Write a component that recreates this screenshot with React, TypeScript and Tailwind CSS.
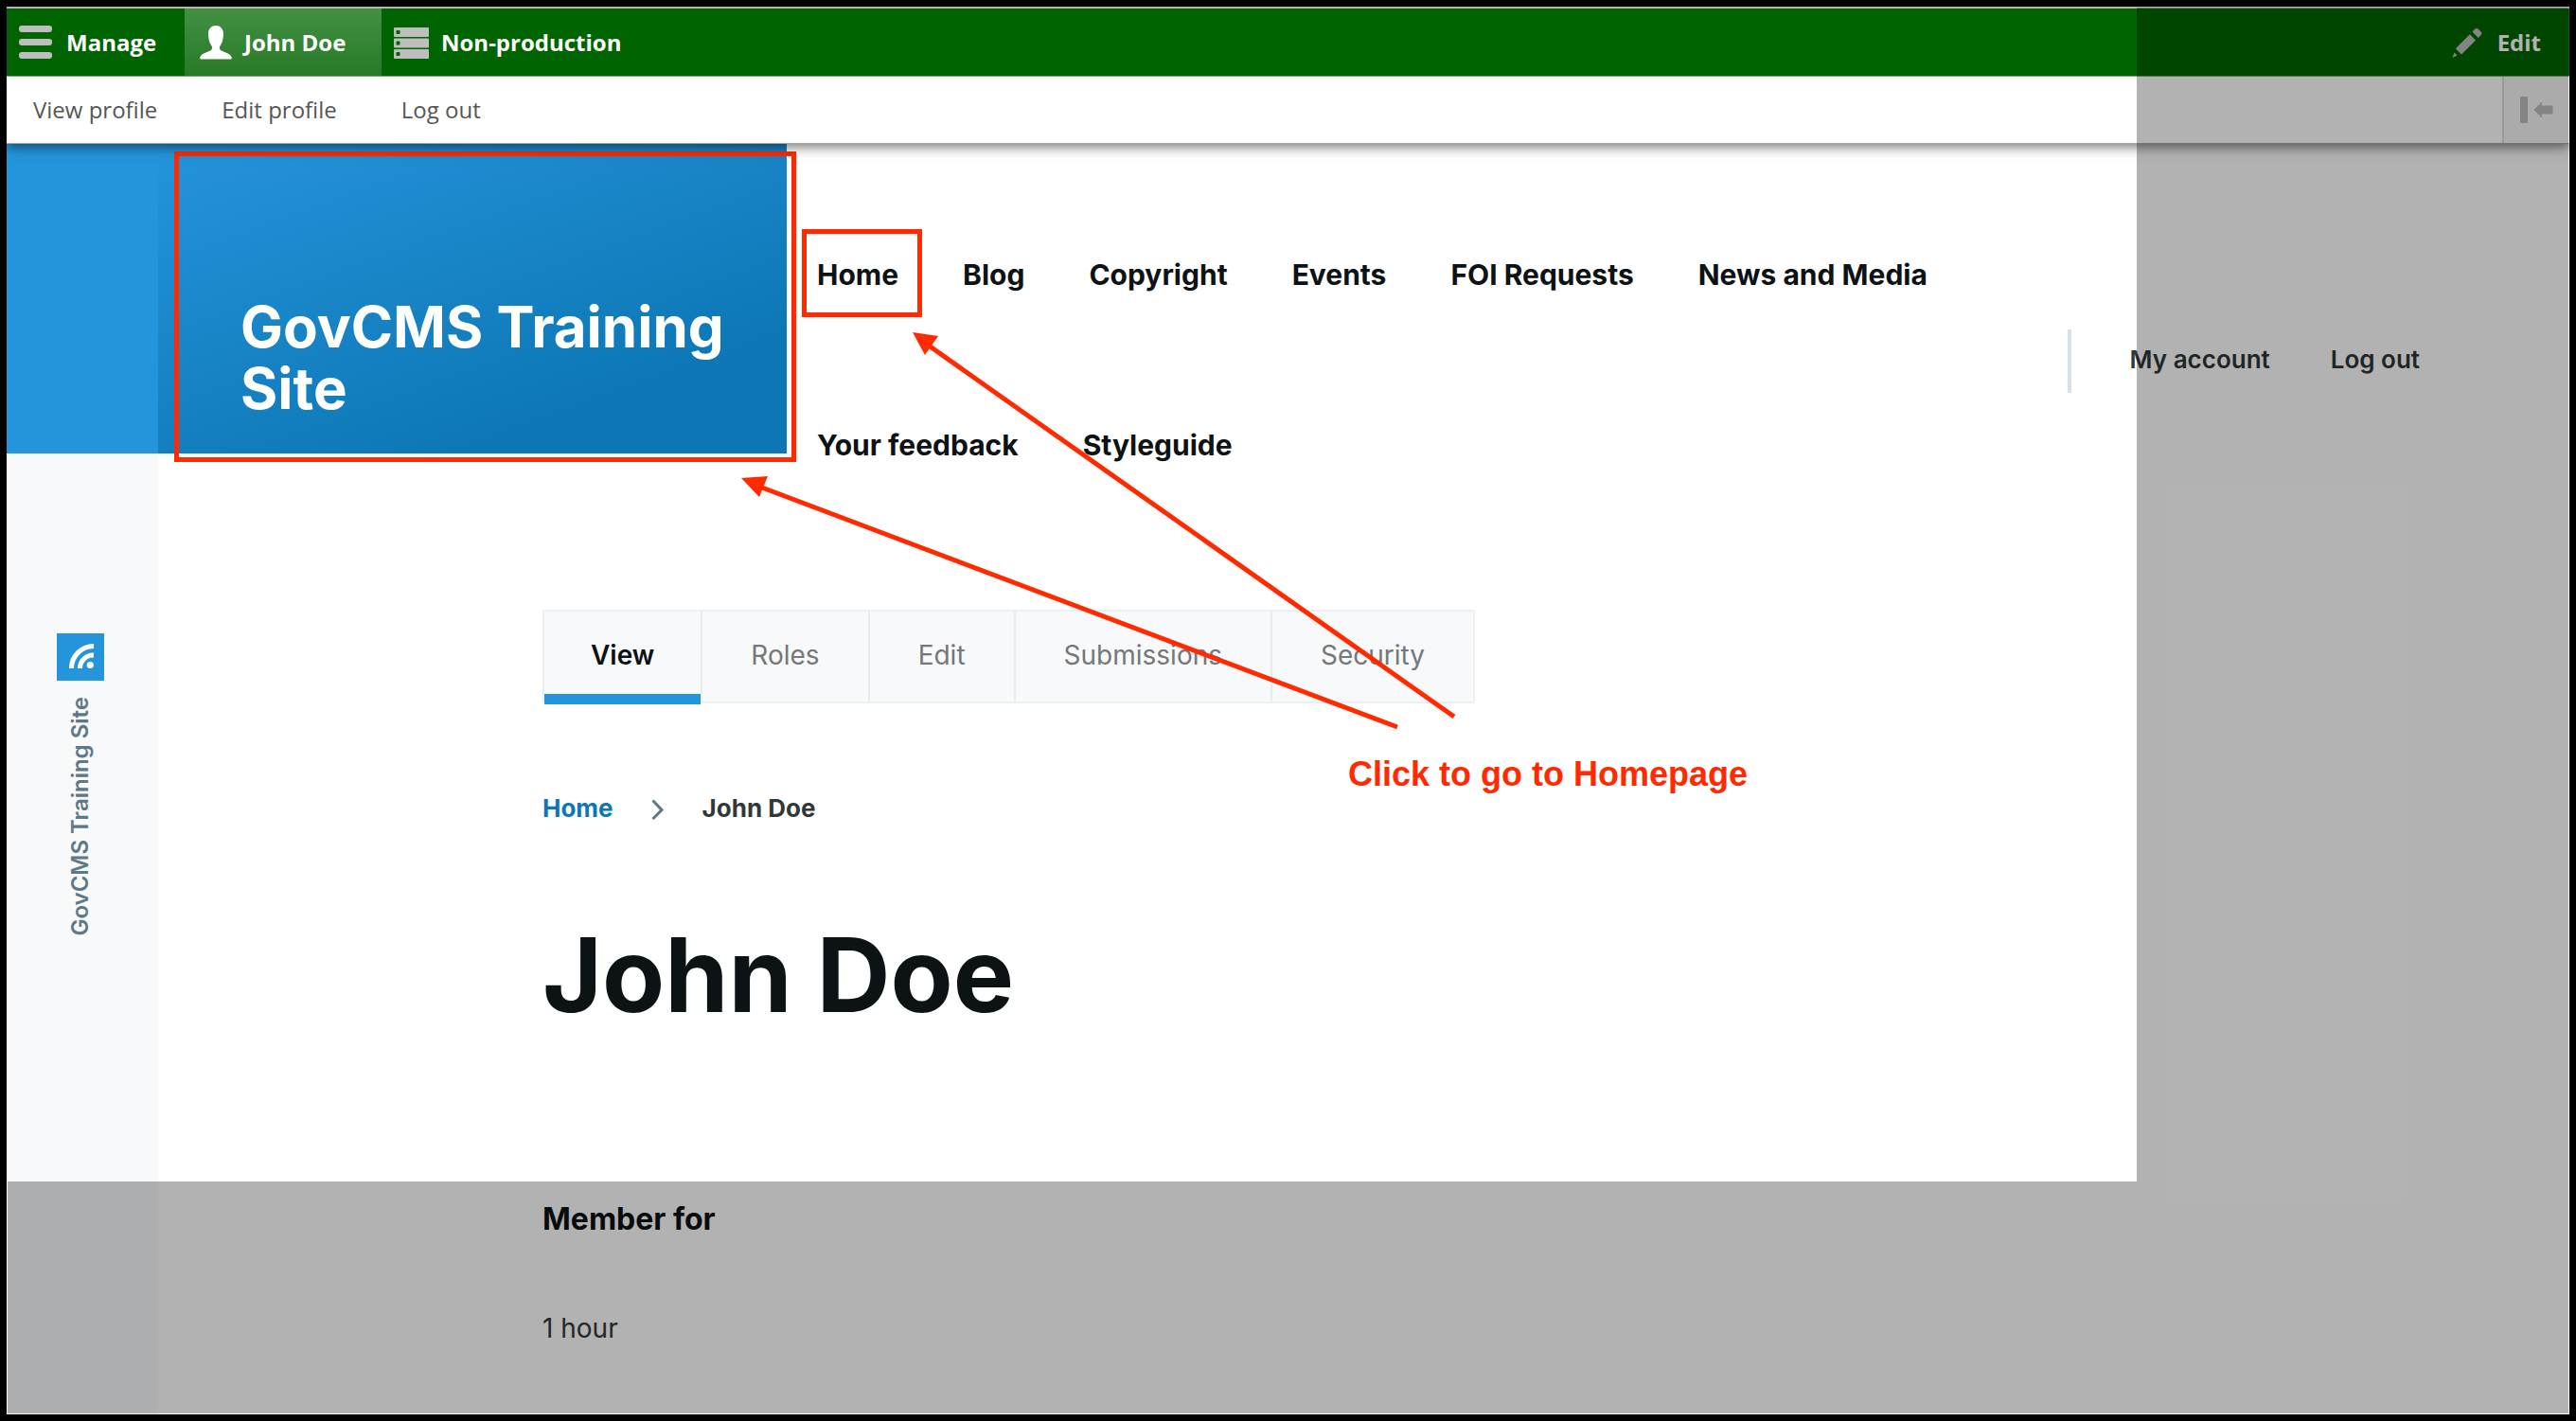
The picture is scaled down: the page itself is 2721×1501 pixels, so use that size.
import type { ReactNode } from 'react';

const navItems = ['Home', 'Blog', 'Copyright', 'Events', 'FOI Requests', 'News and Media', 'Your feedback', 'Styleguide'];
const tabs = ['View', 'Roles', 'Edit', 'Submissions', 'Security'];

function MenuIcon() {
  return (
    <svg className="h-10 w-10" viewBox="0 0 40 40" fill="#bebebe" aria-hidden="true">
      <rect x="3" y="2" width="35" height="7" rx="3" />
      <rect x="3" y="16" width="35" height="7" rx="3" />
      <rect x="3" y="30" width="35" height="7" rx="3" />
    </svg>
  );
}

function PersonIcon() {
  return (
    <svg className="h-10 w-10" viewBox="0 0 40 40" fill="#fff" aria-hidden="true">
      <path d="M23 2C17.500 2 14.600 6.500 15 12C15.300 17 16.600 21 18.500 23.500C19.500 25 19.300 27 17.500 28.300C14 30.500 7 31.500 6.200 36Q6 37.500 7.200 37.500H38.800Q40 37.500 39.800 36C39 31.500 32 30.500 28.500 28.300C26.700 27 26.500 25 27.500 23.500C29.400 21 30.700 17 31 12C31.400 6.500 28.500 2 23 2Z" />
    </svg>
  );
}

function ServerIcon() {
  return (
    <svg className="h-10 w-10" viewBox="0 0 40 40" aria-hidden="true">
      {[4, 15.5, 27].map((y) => (
        <g key={y}>
          <rect x="3" y={y} width="37" height="10" rx="1" fill="#bebebe" />
          <rect x="5.500" y={y + 3} width="4" height="4" rx="1" fill="#006400" />
        </g>
      ))}
    </svg>
  );
}

function PencilIcon() {
  return (
    <svg className="h-8 w-8" viewBox="0 0 32 32" fill="#bebebe" aria-hidden="true">
      <path d="M0.500 32L2.500 26.500L5.500 29.600Z" />
      <path d="M3.800 22.300L18.800 7.200L25 13.400L10 28.500Z" />
      <path d="M21.500 4.500L24.700 1.300Q26 0 27.300 1.300L31 5Q32 6.300 31 7.600L27.700 11Z" />
    </svg>
  );
}

function CollapseIcon() {
  return (
    <svg className="h-8 w-10" viewBox="0 0 40 32" fill="#bebebe" aria-hidden="true">
      <rect x="2" y="2" width="8" height="28" rx="1" />
      <path d="M16.500 16L25 7.500V11.500H36.500V20.500H25V24.500Z" />
    </svg>
  );
}

function FeedIcon() {
  return (
    <svg className="h-full w-full" viewBox="0 0 50 50" fill="none" stroke="#fff" strokeWidth="5" aria-hidden="true">
      <path d="M15.500 37A23.500 23.500 0 0 1 39 13.500" />
      <path d="M24.500 37A14 14 0 0 1 39 23" />
      <circle cx="35.300" cy="33.500" r="3.600" fill="#fff" stroke="none" />
    </svg>
  );
}

function ToolbarTab({ icon, children, className }: { icon: ReactNode; children: ReactNode; className: string }) {
  return (
    <button type="button" className={`flex items-center gap-[13px] pl-[10px] ${className}`}>
      {icon}
      {children}
    </button>
  );
}

function AdminToolbar() {
  return (
    <div className="relative z-10 font-['Open_Sans','Noto_Sans',sans-serif] text-2xl shadow-[0_3px_12px_rgba(0,0,0,0.55)]">
      <div className="flex h-[74px] justify-between border-t-2 border-b border-t-[#b5b5b5] border-b-[#6fa76f] bg-[#006400] font-bold text-white">
        <div className="flex">
          <ToolbarTab icon={<MenuIcon />} className="min-w-[188px]">Manage</ToolbarTab>
          <ToolbarTab icon={<PersonIcon />} className="min-w-[208px] bg-linear-to-b from-[#439043] to-[#267a26]">John Doe</ToolbarTab>
          <ToolbarTab icon={<ServerIcon />} className="pr-8">Non-production</ToolbarTab>
        </div>
        <button type="button" className="flex items-center gap-4 pr-[30px]">
          <PencilIcon />
          Edit
        </button>
      </div>
      <div className="flex h-[71px] justify-between border-b border-[#a6a6a6] bg-white text-[#565656]">
        <nav className="flex items-center gap-[68px] pl-7" aria-label="User">
          <a href="#profile">View profile</a>
          <a href="#edit-profile">Edit profile</a>
          <a href="#logout">Log out</a>
        </nav>
        <button type="button" aria-label="Vertical orientation" className="flex w-[71px] items-center justify-center border-l-2 border-[#dddddd] bg-[#f5f5f5]">
          <CollapseIcon />
        </button>
      </div>
    </div>
  );
}

function SideRail() {
  return (
    <aside className="w-40 shrink-0 bg-[#f7f9fb]">
      <div className="h-[327px] bg-[#2494db]" />
      <div className="flex flex-col items-center pt-[190px] pr-1">
        <a href="#feed" aria-label="RSS feed" className="block size-[50px] bg-[#2494db]">
          <FeedIcon />
        </a>
        <div className="mt-[17px] rotate-180 text-2xl font-semibold text-[#5f7888] [writing-mode:vertical-rl]">GovCMS Training Site</div>
      </div>
    </aside>
  );
}

function SiteHeader() {
  return (
    <header className="flex items-start">
      <div className="relative flex h-[327px] w-[664px] shrink-0 flex-col justify-end bg-[linear-gradient(160deg,#2494db_0%,#0d77b5_79%)] pr-10 pb-9 pl-[87px]">
        <a href="#home" className="text-[60px] leading-[65px] font-bold text-white">GovCMS Training Site</a>
        <div className="absolute top-2 -right-[10px] -bottom-[9px] left-[17px] border-5 border-[#ff2a00]" />
      </div>
      <nav className="mt-12 flex-1 pl-8" aria-label="Main">
        <ul className="flex flex-wrap gap-x-[68px] text-3xl leading-[180px] font-bold text-[#0d1214]">
          {navItems.map((item) => (
            <li key={item} className="relative">
              <a href={`#${item.toLowerCase().replaceAll(' ', '-')}`}>{item}</a>
              {item === 'Home' && (
                <div className="absolute top-[42px] -right-[25px] bottom-[45px] -left-4 border-5 border-[#ff2a00]" />
              )}
            </li>
          ))}
        </ul>
      </nav>
      <nav className="mt-[196px] mr-[158px] flex h-[67px] items-center gap-16 border-l-4 border-[#d7e1e8] pb-1 pl-[62px] text-[26px] font-semibold text-[#2f3737]" aria-label="Account">
        <a href="#account">My account</a>
        <a href="#logout">Log out</a>
      </nav>
    </header>
  );
}

function ProfileContent() {
  return (
    <main className="pt-[84px] pl-[406px]">
      <nav className="flex h-[99px] w-fit border-2 border-[#ebf0f3] bg-[#f7f9fb] text-[28px]" aria-label="Tabs">
        {tabs.map((tab) =>
          tab === 'View' ? (
            <a key={tab} href="#view" aria-current="page" className="relative flex items-center px-[49px] pb-1 font-semibold text-[#0d1214]">
              {tab}
              <span className="absolute inset-x-0 -bottom-[3px] h-[11px] bg-[#2494db]" />
            </a>
          ) : (
            <a key={tab} href={`#${tab.toLowerCase()}`} className="flex items-center border-l-2 border-[#e6ebee] px-[51px] pb-1 text-[#757778]">
              {tab}
            </a>
          ),
        )}
      </nav>
      <nav className="mt-[95px] flex items-center text-[26px] leading-8 font-bold" aria-label="Breadcrumb">
        <a href="#home" className="text-[#0d77b5]">Home</a>
        <svg className="mx-[39px] h-6 w-4" viewBox="0 0 16 24" fill="none" stroke="#5f7888" strokeWidth="3" aria-hidden="true">
          <path d="M2.500 3.500L12 13.500L2.500 23" />
        </svg>
        <span className="text-[#313838]">John Doe</span>
      </nav>
      <h1 className="mt-[100px] text-[108px] leading-[120px] font-bold text-[#0d1214]">John Doe</h1>
      <h2 className="mt-[178px] text-[32px] leading-10 font-bold text-[#0d1214]">Member for</h2>
      <p className="mt-[75px] text-[28px] leading-10 text-[#313838]">1 hour</p>
    </main>
  );
}

function Annotations() {
  return (
    <div className="pointer-events-none absolute inset-0 z-20 overflow-hidden">
      <div className="absolute top-px right-px bottom-px w-[456px] bg-black/30" />
      <div className="absolute right-[457px] bottom-px left-px h-[245px] bg-black/30" />
      <svg className="absolute inset-0 h-full w-full" fill="#ff2a00" stroke="#ff2a00" aria-hidden="true">
        <path d="M1529 750L974 358M1469 761L790 505" strokeWidth="5" />
        <path d="M957 344L984 348L970 368Z" stroke="none" />
        <path d="M776 498L804 496L795 518Z" stroke="none" />
      </svg>
      <p className="absolute top-[791px] left-[1417px] font-['Liberation_Sans',Arial,sans-serif] text-4xl font-bold whitespace-nowrap text-[#ff2a00]">
        Click to go to Homepage
      </p>
    </div>
  );
}

export default function App() {
  return (
    <div className="flex min-h-screen flex-col bg-black p-[7px] font-['Inter','Open_Sans',sans-serif]">
      <div className="relative flex flex-1 flex-col bg-white">
        <AdminToolbar />
        <div className="flex flex-1">
          <SideRail />
          <div className="min-w-0 flex-1">
            <SiteHeader />
            <ProfileContent />
          </div>
        </div>
        <Annotations />
      </div>
    </div>
  );
}
